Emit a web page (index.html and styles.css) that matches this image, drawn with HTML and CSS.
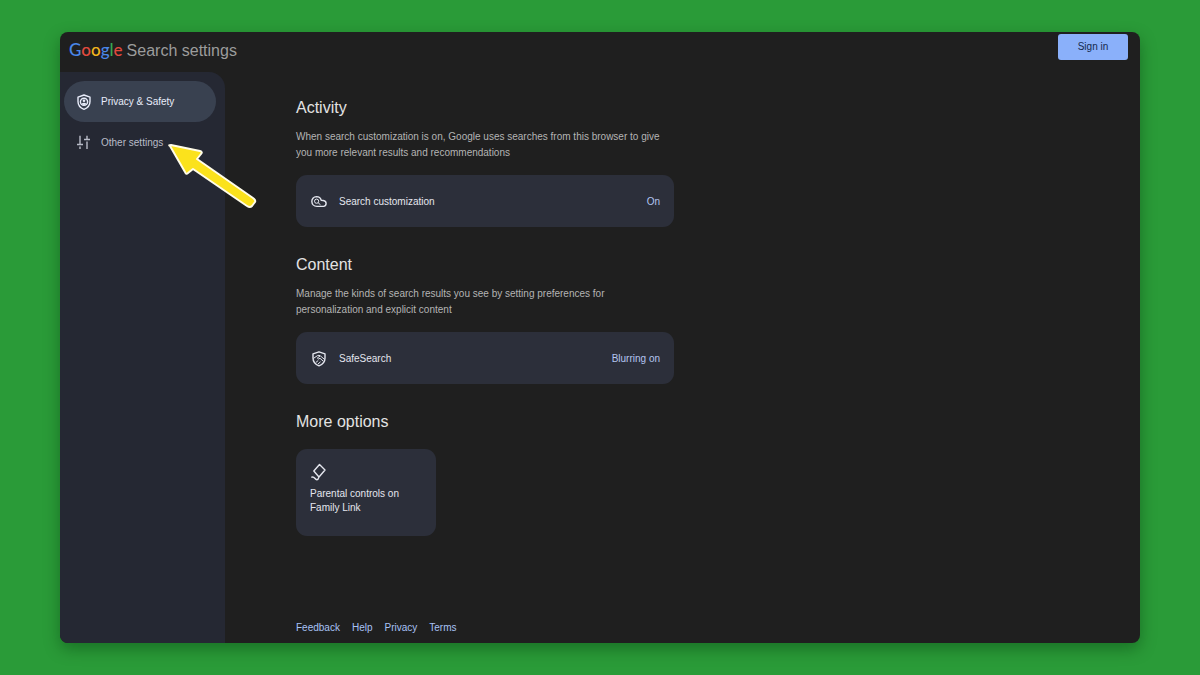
FILE: index.html
```html
<!DOCTYPE html>
<html lang="en">
<head>
<meta charset="utf-8">
<title>Search settings</title>
<link rel="stylesheet" href="styles.css">
</head>
<body>
<div class="window">
  <header class="topbar">
    <h1 class="brand"><span class="logo"><span class="blue">G</span><span class="red">o</span><span class="yellow">o</span><span class="blue">g</span><span class="green">l</span><span class="red">e</span></span><span>Search settings</span></h1>
    <button class="sign-in" type="button">Sign in</button>
  </header>
  <div class="layout">
    <nav class="sidebar">
      <a class="nav-item active" href="#privacy">
        <svg class="icon" viewBox="0 0 16 16"><path d="M8 1 14 3.200V7.500C14 11.300 11.500 14 8 15.300 4.500 14 2 11.300 2 7.500V3.200Z"/><circle cx="8" cy="7.800" r="3.600"/><circle class="solid" cx="8" cy="6.700" r="1.300"/><path class="solid" d="M5.500 9.800Q8 7.900 10.500 9.800 8 12.300 5.500 9.800Z"/></svg>
        <span>Privacy &amp; Safety</span>
      </a>
      <a class="nav-item" href="#other">
        <svg class="icon" viewBox="0 0 16 16"><path d="M4 .8V9.500M1 9.500H7M4 11.500V14M11 .8V4.500M8 4.500H14M11 6.500V14"/></svg>
        <span>Other settings</span>
      </a>
    </nav>
    <main class="content">
      <section class="group">
        <h2>Activity</h2>
        <p>When search customization is on, Google uses searches from this browser to give you more relevant results and recommendations</p>
        <a class="card" href="#customization">
          <svg class="icon" viewBox="0 0 16 16"><path d="M5.500 2.600C8.300 2.600 9.700 4.300 10.200 6.200L12.300 6.500C16.200 7 15.800 12.300 12.500 12.400H6C-.8 12.400-.8 2.700 5.500 2.600Z"/><circle class="thin" cx="5.600" cy="7.200" r="2.100"/><path class="thin" d="M7.100 8.700 9.500 10.800"/></svg>
          <span>Search customization</span>
          <span class="value">On</span>
        </a>
      </section>
      <section class="group">
        <h2>Content</h2>
        <p>Manage the kinds of search results you see by setting preferences for personalization and explicit content</p>
        <a class="card" href="#safesearch">
          <svg class="icon" viewBox="0 0 16 16"><path d="M8 .8 14 2.800V7C14 10.800 11.500 13.500 8 14.800 4.500 13.500 2 10.800 2 7V2.800Z"/><path class="thin" d="M2.300 7.500 6.500 4.600Q8 3.800 9.500 5L13.600 8.500M9 5 6.300 7Q7.200 8.800 9 7.300L12 10M4.800 11.500 7.200 9.500M7 13 9.500 10.800"/></svg>
          <span>SafeSearch</span>
          <span class="value">Blurring on</span>
        </a>
      </section>
      <section class="group">
        <h2>More options</h2>
        <a class="tile" href="#family">
          <svg class="icon kite" viewBox="0 0 18 18"><path d="M9.500 1.500 15 7 9 14 3.800 8ZM9 14C7.800 18 6 16.800 4.800 15.300 3.800 14 2.800 13.500 1.300 14.300"/></svg>
          <span>Parental controls on Family Link</span>
        </a>
      </section>
      <footer class="links">
        <a href="#feedback">Feedback</a>
        <a href="#help">Help</a>
        <a href="#privacy-policy">Privacy</a>
        <a href="#terms">Terms</a>
      </footer>
    </main>
  </div>
  <svg class="pointer" viewBox="0 0 92 68"><path d="M4 5Q2 4 5 4L34 10Q37 11 35 13L31 18 87 57Q90 59 89 61L86 65Q84 67 81 65L27 28 22 32Q20 34 19 31Z"/></svg>
</div>
</body>
</html>
```
FILE: styles.css
```css
* { box-sizing: border-box; }

body {
  margin: 0;
  min-height: 100vh;
  padding: 32px 60px;
  display: flex;
  background: #2a9b38;
  color: #e4e6ee;
  font: 10px/16px "Liberation Sans", Arial, sans-serif;
}

a { color: inherit; text-decoration: none; }
h1, h2, p { margin: 0; font-weight: 400; }

.window {
  position: relative;
  flex: 1;
  display: flex;
  flex-direction: column;
  overflow: hidden;
  background: #1f1f1f;
  border-radius: 8px;
  box-shadow: 0 6px 16px rgba(0, 50, 10, 0.4);
}

.topbar {
  display: flex;
  justify-content: space-between;
  align-items: flex-start;
  height: 40px;
  padding: 2px 12px 0 9px;
}

.brand {
  display: flex;
  align-items: baseline;
  gap: 4px;
  color: #9c9c9c;
  font-size: 16px;
  line-height: 32px;
}

.logo { font-family: Lato, sans-serif; font-size: 17px; font-weight: 500; }
.blue { color: #4a86e8; }
.red { color: #e34a3e; }
.yellow { color: #f2b51d; }
.green { color: #36a853; }

.sign-in {
  width: 70px;
  height: 26px;
  padding: 0;
  border: 0;
  border-radius: 3px;
  background: #8ab0fa;
  color: #14284c;
  font: inherit;
}

.layout { flex: 1; display: flex; }

.sidebar {
  width: 165px;
  flex: none;
  padding: 9px 9px 0 4px;
  background: #252833;
  border-radius: 0 16px 0 0;
}

.nav-item {
  display: flex;
  align-items: center;
  gap: 9px;
  height: 41px;
  padding-left: 12px;
  border-radius: 21px;
  color: #b9bcc8;
}

.nav-item.active { background: #394150; color: #e8ecfa; }

.icon {
  flex: none;
  width: 16px;
  height: 16px;
  fill: none;
  stroke: currentColor;
  stroke-width: 1.4;
  stroke-linejoin: round;
}

.icon .solid { fill: currentColor; stroke: none; }
.icon .thin { stroke-width: 1; }

.content {
  flex: 1;
  display: flex;
  flex-direction: column;
  padding: 24px 71px 7px;
}

.group { width: 100%; max-width: 378px; margin-bottom: 26px; }

.group h2 { font-size: 16px; line-height: 24px; color: #e3e3e3; }
.group p { margin: 9px 0 14px; color: #b4b4b4; }

.card {
  display: flex;
  align-items: center;
  gap: 12px;
  height: 52px;
  padding: 1px 14px 0 15px;
  background: #2c2f3a;
  border-radius: 11px;
}

.value { margin-left: auto; color: #b3c5f0; }

.tile {
  display: flex;
  flex-direction: column;
  width: 140px;
  height: 87px;
  margin-top: 15px;
  padding: 14px;
  background: #2c2f3a;
  border-radius: 11px;
  line-height: 14px;
}

.kite { width: 18px; height: 18px; margin-bottom: 6px; }

.links {
  display: flex;
  gap: 12px;
  margin-top: auto;
  color: #a8c2f5;
}

.pointer {
  position: absolute;
  left: 106px;
  top: 109px;
  width: 92px;
  height: 68px;
  fill: #fbe21c;
  stroke: #fffce8;
  stroke-width: 2;
  stroke-linejoin: round;
}
```
